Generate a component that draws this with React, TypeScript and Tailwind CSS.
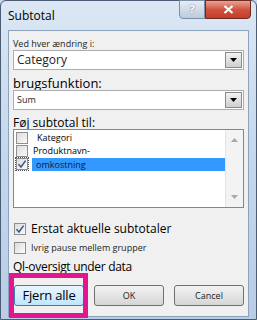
import React from 'react';

const font = { fontFamily: '"Open Sans", "Noto Sans", "Liberation Sans", sans-serif' };

function Check({ checked }: { checked?: boolean }) {
  return (
    <div className="w-[12px] h-[12px] border border-[#8f8f8f] bg-gradient-to-br from-[#dcdcdc] to-[#fbfbfb] flex items-center justify-center shrink-0">
      {checked && (
        <svg width="10" height="10" viewBox="0 0 10 10">
          <path d="M1.5 5.2 L4 8 L8.6 1.6" fill="none" stroke="#3a5a8c" strokeWidth="1.6" />
        </svg>
      )}
    </div>
  );
}

function Combo({ value, small }: { value: string; small?: boolean }) {
  return (
    <div className="h-[20px] flex border border-[#abadb3] bg-white">
      <div className={`flex-1 flex items-center pl-[3px] text-[#1e1e1e] ${small ? 'text-[9px]' : 'text-[12px]'}`}>
        {value}
      </div>
      <div className="w-[17px] m-[1px] border border-[#8a8a8a] bg-gradient-to-b from-[#f2f2f2] to-[#cfcfcf] flex items-center justify-center">
        <svg width="7" height="4" viewBox="0 0 7 4">
          <path d="M0 0 H7 L3.5 4 Z" fill="#000" />
        </svg>
      </div>
    </div>
  );
}

function Btn({ label, big, focus }: { label: string; big?: boolean; focus?: boolean }) {
  return (
    <div
      className={`w-[70px] h-[21px] rounded-[3px] border flex items-center justify-center ${
        focus ? 'border-[#3c7fb1] bg-gradient-to-b from-[#eaf6fd] to-[#bee6fd]' : 'border-[#707070] bg-gradient-to-b from-[#f2f2f2] to-[#d6d6d6]'
      } ${big ? 'text-[13px] text-black tracking-[-0.2px]' : 'text-[9px] text-[#222]'}`}
    >
      {label}
    </div>
  );
}

export default function App() {
  return (
    <div className="relative w-[257px] h-[320px] overflow-hidden bg-[#c4d7ec]" style={font}>
      <div className="w-[257px] h-[320px] rounded-t-[6px] border border-[#4b5d74] bg-gradient-to-b from-[#dbe7f4] via-[#c4d7ec] to-[#b8cde6] flex flex-col">
        {/* title bar */}
        <div className="h-[29px] flex items-start relative">
          <div className="pl-[7px] pt-[6px] text-[12px] text-black">Subtotal</div>
          <div className="absolute right-[5px] top-[-1px] flex">
            <div className="w-[26px] h-[19px] border border-[#7d8fa6] rounded-bl-[4px] bg-gradient-to-b from-[#e6edf5] to-[#bccbdc] flex items-center justify-center text-[11px] font-bold text-white [text-shadow:0_0_2px_#667]">
              ?
            </div>
            <div className="w-[46px] h-[19px] border border-[#6e2a24] rounded-br-[4px] bg-gradient-to-b from-[#e8a493] via-[#d0533f] to-[#c43c28] flex items-center justify-center">
              <svg width="11" height="9" viewBox="0 0 11 9">
                <path d="M1.5 1 L9.5 8 M9.5 1 L1.5 8" stroke="#fff" strokeWidth="2.2" />
              </svg>
            </div>
          </div>
        </div>
        {/* client panel */}
        <div className="ml-[7px] w-[241px] h-[287px] border border-[#8da3bd] bg-[#f0f0f0] px-[4px] flex flex-col">
          <div className="h-[19px] pt-[6px] text-[9px] leading-[13px] text-[#1e1e1e]">Ved hver ændring i:</div>
          <Combo value="Category" />
          <div className="h-[20px] pt-[7px] text-[13px] leading-[13px] text-black">brugsfunktion:</div>
          <Combo value="Sum" small />
          <div className="h-[19px] pt-[6px] text-[12px] leading-[13px] text-black">Føj subtotal til:</div>
          <div className="h-[79px] border border-[#828790] bg-white flex">
            <div className="flex-1 flex flex-col pt-[1px] pl-[2px] text-[9px] text-black">
              <div className="h-[13px] flex items-center">
                <Check />
                <span className="ml-[9px]">Kategori</span>
              </div>
              <div className="h-[13px] flex items-center">
                <Check />
                <span className="ml-[5px]">Produktnavn-</span>
              </div>
              <div className="h-[14px] flex items-center">
                <div className="outline outline-1 outline-dotted outline-[#555]">
                  <Check checked />
                </div>
                <span className="ml-[4px] flex-1 h-[13px] bg-[#3399ff] pl-[4px] leading-[13px] text-[#0a1a40]">omkostning</span>
              </div>
            </div>
            <div className="w-[18px] border-l border-[#e4e4e4] bg-[#f3f3f3] flex flex-col items-center justify-between py-[8px]">
              <svg width="7" height="4" viewBox="0 0 7 4">
                <path d="M0 4 H7 L3.5 0 Z" fill="#a8a8a8" />
              </svg>
              <svg width="7" height="4" viewBox="0 0 7 4">
                <path d="M0 0 H7 L3.5 4 Z" fill="#a8a8a8" />
              </svg>
            </div>
          </div>
          <div className="mt-[14px] h-[14px] flex items-center pl-[1px]">
            <Check checked />
            <span className="ml-[5px] text-[12px] text-black">Erstat aktuelle subtotaler</span>
          </div>
          <div className="mt-[6px] h-[12px] flex items-center pl-[1px]">
            <Check />
            <span className="ml-[5px] text-[9px] text-[#1e1e1e]">Ivrig pause mellem grupper</span>
          </div>
          <div className="mt-[6px] h-[14px] flex items-center text-[12px] tracking-[-0.3px] text-black">Ql-oversigt under data</div>
          <div className="mt-[11px] flex items-center pl-[1px] gap-[10px]">
            <Btn label="Fjern alle" big focus />
            <Btn label="OK" />
            <Btn label="Cancel" />
          </div>
        </div>
      </div>
      {/* highlight annotation */}
      <div className="absolute left-[9px] top-[273px] w-[79px] h-[45px] border-[5px] border-[#e3168f]" />
    </div>
  );
}
